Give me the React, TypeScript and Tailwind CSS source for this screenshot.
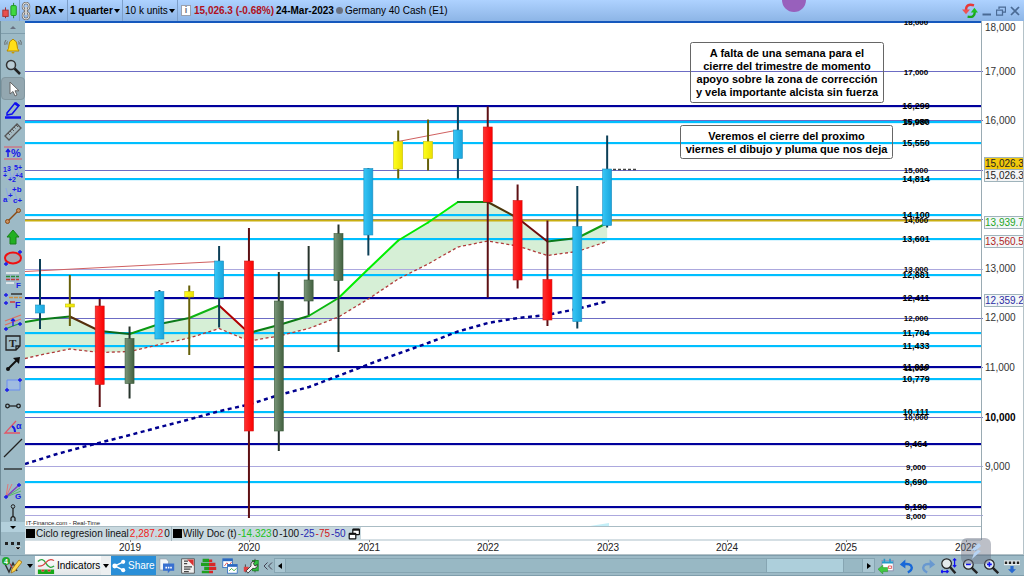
import type { ReactNode } from 'react'

const LEFT = 25
const TOP = 21
const AXIS_X = 981

const priceToY = (price: number) => 71.5 + (17000 - price) * 0.04938
const candleX = (index: number) => 40 + index * 29.85

const roundLevels = [17000, 16000, 15000, 14000, 13000, 12000, 11000, 10000, 9000, 8000]

const levels = [
  { price: 16299, color: '#00009c' },
  { price: 15980, color: '#00bfff' },
  { price: 15550, color: '#00bfff' },
  { price: 14814, color: '#00bfff' },
  { price: 14100, color: '#00bfff' },
  { price: 13601, color: '#00bfff' },
  { price: 12881, color: '#00bfff' },
  { price: 12411, color: '#00009c' },
  { price: 11704, color: '#00bfff' },
  { price: 11433, color: '#00bfff' },
  { price: 11010, color: '#00009c' },
  { price: 10779, color: '#00bfff' },
  { price: 10111, color: '#00bfff' },
  { price: 9464, color: '#00009c' },
  { price: 8690, color: '#00bfff' },
  { price: 8190, color: '#00009c' },
]

// kind, wick top, wick bottom, body top, body bottom
const candles: [string, number, number, number, number][] = [
  ['blue', 259, 329, 305, 313],
  ['yellow', 275, 326, 304, 307],
  ['red', 299, 407, 306, 384.5],
  ['green', 326.5, 398.5, 338.5, 383.5],
  ['blue', 290, 339, 291.5, 339],
  ['yellow', 285.5, 355, 291.5, 297],
  ['blue', 246, 327.5, 261, 297.5],
  ['red', 228, 518, 261, 431],
  ['green', 272, 451, 301, 431],
  ['green', 246, 315, 280, 301],
  ['green', 224.5, 352, 233.5, 280.5],
  ['blue', 168, 255.5, 168.5, 235],
  ['yellow', 130.5, 178.5, 141.5, 169],
  ['yellow', 119.5, 170.5, 141.5, 158.5],
  ['blue', 106.5, 178.5, 130, 158.5],
  ['red', 106.5, 297.5, 127, 202],
  ['red', 184.5, 288.5, 200.5, 280],
  ['red', 220.5, 326, 279.5, 320],
  ['blue', 186, 328.5, 226.5, 321.5],
  ['blue', 135.5, 227.5, 169, 225.5],
]

const bodyFill: Record<string, string> = {
  blue: 'url(#candle-blue)',
  yellow: 'url(#candle-yellow)',
  red: 'url(#candle-red)',
  green: 'url(#candle-green)',
}
const bodyStroke: Record<string, string> = {
  blue: '#1f8fc0',
  yellow: '#c8c010',
  red: '#d01818',
  green: '#3c5a3c',
}
const wickColor: Record<string, string> = {
  blue: '#0c3f57',
  yellow: '#66600a',
  red: '#5e1014',
  green: '#26332b',
}

const upper = [319.5, 316.5, 331, 334, 324, 318, 305.5, 333, 325, 316, 298, 269, 240.5, 222.5, 202, 202, 218, 241.5, 238, 223]
const lower = [355, 349, 352.5, 351.5, 344.5, 338, 328.5, 341, 336, 328.5, 317, 299, 279, 264, 247, 241, 246, 255.5, 251.5, 241.5]
const upperColors = [
  '#0b7a1b', '#562f0c', '#0b6a1b', '#0b9a12', '#0b7a1b', '#0fb414', '#b00000', '#0b8014', '#0b7a14', '#0bb80f',
  '#00ee00', '#00f000', '#00e800', '#00f000', '#0b8c14', '#4a360a', '#6e0c0c', '#0b7a1b', '#0f9c14',
]

const upperPoints = [`${LEFT},322`, ...upper.map((y, i) => `${candleX(i)},${y}`)]
const lowerPoints = [`${LEFT},358.5`, ...lower.map((y, i) => `${candleX(i)},${y}`)]

const slowAverage =
  '25,464 57,454 75,449 130,435 160,427 187,420 220,411 249,404.5 279,395 309,387 338,376 380,360 400,353 428,343 458,331.5 488,323 518,318 547,315 577,309 608,301'

const years = [2019, 2020, 2021, 2022, 2023, 2024, 2025, 2026]

const Note = ({ x, y, width, height, lines }: { x: number; y: number; width: number; height: number; lines: string[] }) => (
  <g>
    <rect x={x} y={y} width={width} height={height} rx="2" fill="none" stroke="#666" />
    {lines.map((line, i) => (
      <text
        key={line}
        x={x + width / 2}
        y={y + 14 + i * 13}
        textAnchor="middle"
        className="fill-black text-[11px] font-bold"
      >
        {line}
      </text>
    ))}
  </g>
)

const PriceTag = ({ y, text, fill, color }: { y: number; text: string; fill: string; color: string }) => (
  <g>
    <rect x="984.5" y={y - 6.5} width="42" height="12" fill={fill} stroke="#9fb3bb" />
    <text x="985" y={y + 3} fill={color} className="text-[10px]">
      {text}
    </text>
  </g>
)

const Chart = () => (
  <svg viewBox="25 21 999 534" className="block h-full w-full" role="img" aria-label="DAX">
    <defs>
      <linearGradient id="candle-blue">
        <stop offset="0" stopColor="#35c6f6" />
        <stop offset="1" stopColor="#1aa5dc" />
      </linearGradient>
      <linearGradient id="candle-yellow">
        <stop offset="0" stopColor="#ffff1c" />
        <stop offset="1" stopColor="#ebe000" />
      </linearGradient>
      <linearGradient id="candle-red">
        <stop offset="0" stopColor="#ff3232" />
        <stop offset="1" stopColor="#fb0000" />
      </linearGradient>
      <linearGradient id="candle-green">
        <stop offset="0" stopColor="#7a967a" />
        <stop offset="1" stopColor="#42603f" />
      </linearGradient>
    </defs>

    <polygon points={[...upperPoints, ...[...lowerPoints].reverse()].join(' ')} fill="#d6efd6" />

    {/* price levels */}
    <path d={`M${LEFT} 22H${AXIS_X}`} stroke="#1558bd" strokeWidth="2" />
    {roundLevels.map((price) => (
      <path
        key={price}
        d={`M${LEFT} ${Math.floor(priceToY(price)) + 0.5}H${AXIS_X + 2}`}
        stroke={price === 8000 || price === 9000 || price === 13000 ? '#aca8de' : '#6c6cc4'}
      />
    ))}
    {levels.map(({ price, color }) => (
      <g key={price}>
        <path d={`M${LEFT} ${Math.round(priceToY(price))}H${AXIS_X}`} stroke={color} strokeWidth="2" />
        <path d={`M${LEFT} ${Math.round(priceToY(price)) + 1}H${AXIS_X}`} stroke={color} opacity="0.3" />
      </g>
    ))}
    <path d={`M${LEFT} 220.5H${AXIS_X}`} stroke="#c9ae10" strokeWidth="2" />

    <path d="M25 271.5L219 261.5M398 141.5L458 130" stroke="#d06060" fill="none" />

    {/* fast averages */}
    <polyline points={lowerPoints.join(' ')} fill="none" stroke="#b03a3a" strokeWidth="1.3" strokeDasharray="3 2.5" />
    <path d={`M${LEFT} 322L40 319.5`} stroke="#0b8c14" strokeWidth="2" />
    {upperColors.map((color, i) => (
      <path
        key={i}
        d={`M${candleX(i)} ${upper[i]}L${candleX(i + 1)} ${upper[i + 1]}`}
        stroke={color}
        strokeWidth="2"
        strokeLinecap="round"
      />
    ))}
    <polyline points={slowAverage} fill="none" stroke="#00008f" strokeWidth="2.5" strokeDasharray="4 3.5" />

    {candles.map(([kind, high, low, top, bottom], i) => (
      <g key={i}>
        <path d={`M${candleX(i)} ${high}V${low}`} stroke={wickColor[kind]} strokeWidth="2" />
        <rect
          x={candleX(i) - 4.5}
          y={top}
          width="9"
          height={bottom - top}
          fill={bodyFill[kind]}
          stroke={bodyStroke[kind]}
          strokeWidth="0.6"
        />
      </g>
    ))}
    <path d="M613 169.5H638" stroke="#444" strokeWidth="1.5" strokeDasharray="3 2" />
    <path d="M590 526L609 523V526Z" fill="#c4eff8" />

    {/* level captions */}
    <g textAnchor="middle" className="fill-black text-[8px] font-bold">
      <text x="916" y="25">18,000</text>
      {roundLevels.map((price) => (
        <text key={price} x="916" y={priceToY(price) + 3}>
          {price.toLocaleString('en-US')}
        </text>
      ))}
    </g>
    <g textAnchor="middle" className="fill-black text-[9px] font-bold">
      {levels.map(({ price }) => (
        <text key={price} x="916" y={priceToY(price) + 3}>
          {price.toLocaleString('en-US')}
        </text>
      ))}
    </g>

    <Note
      x={690.5}
      y={42.5}
      width={193}
      height={60}
      lines={[
        'A falta de una semana para el',
        'cierre del trimestre de momento',
        'apoyo sobre la zona de corrección',
        'y vela importante alcista sin fuerza',
      ]}
    />
    <Note
      x={680.5}
      y={125.5}
      width={212}
      height={33}
      lines={['Veremos el cierre del proximo', 'viernes el dibujo y pluma que nos deja']}
    />

    {/* price axis */}
    <path d={`M${AXIS_X + 0.5} ${TOP}V540`} stroke="#9aabb3" />
    <g className="fill-[#333] text-[10px]">
      <text x="985" y="31">18,000</text>
      {[17000, 16000, 13000, 12000, 11000, 9000].map((price) => (
        <text key={price} x="985" y={Math.round(priceToY(price)) + 3}>
          {price.toLocaleString('en-US')}
        </text>
      ))}
      <text x="985" y="421" className="fill-black font-bold">10,000</text>
    </g>
    <PriceTag y={176} text="15,026.3" fill="#f4f5f6" color="#222" />
    <PriceTag y={164} text="15,026.3" fill="#f2c80c" color="#222" />
    <PriceTag y={223} text="13,939.7" fill="#f3f7f8" color="#1fa51f" />
    <PriceTag y={242} text="13,560.5" fill="#f3f7f8" color="#b02424" />
    <PriceTag y={301} text="12,359.2" fill="#f3f7f8" color="#2c2ca4" />

    {/* time axis */}
    <path d={`M${LEFT} 526.5H${AXIS_X}`} stroke="#aabcc4" />
    <path d={`M${LEFT} 540H${AXIS_X}`} stroke="#d5dfe4" strokeWidth="2" />
    <path d="M25 554.5H1024M1023.5 21V555" stroke="#b4c2c8" />
    <g textAnchor="middle" className="fill-[#222] text-[10px]">
      {years.map((year, i) => (
        <g key={year}>
          <path d={`M${Math.round(130 + i * 119.4)}.5 540v2`} stroke="#888" />
          <text x={Math.round(130 + i * 119.4)} y="551">{year}</text>
        </g>
      ))}
    </g>
    <text x="26" y="525" className="fill-[#222] text-[6px]">IT-Finance.com - Real-Time</text>
  </svg>
)

const Icon = ({ children, className = 'h-5 w-5' }: { children: ReactNode; className?: string }) => (
  <svg viewBox="0 0 20 20" fill="none" className={`shrink-0 ${className}`} aria-hidden="true">
    {children}
  </svg>
)

const Caret = () => <span className="border-x-3 border-t-4 border-x-transparent border-t-black" />

const plus = (x: number, y: number) => `M${x - 2} ${y}h4M${x} ${y - 2}v4`

const tools: { name: string; icon: ReactNode }[] = [
  {
    name: 'Alerts',
    icon: (
      <>
        <path d="M4 15q2-2 2-6 0-4 3-5 1-2 2 0 3 1 3 5 0 4 2 6z" fill="#ffdf18" stroke="#b78a00" />
        <path d="M8.500 16a1.500 1.500 0 0 0 3 0" fill="#c79a00" />
        <path d="M3 4Q1 6 2 9M17 4q2 2 1 5M4.500 5.500q-1 1-.5 3M15.500 5.500q1 1 .5 3" stroke="#555" strokeWidth="0.8" />
      </>
    ),
  },
  {
    name: 'Zoom',
    icon: (
      <>
        <circle cx="8" cy="8" r="4.500" stroke="#333" strokeWidth="1.500" fill="#b9ccd4" />
        <path d="M11.500 11.500L17 17" stroke="#222" strokeWidth="2.500" />
      </>
    ),
  },
  { name: 'Pointer', icon: <path d="M7 3v12l3-2.500 2 4.500 2-1-2-4.200h4z" fill="#fff" stroke="#666" /> },
  {
    name: 'Pencil',
    icon: (
      <>
        <path d="M4 12L12 2l4 2.500L9 13l-5 1z" stroke="#1010ee" strokeWidth="1.500" />
        <path d="M11 3l4 3 1.500-2-3.500-3z" fill="#1010ee" />
        <path d="M2 16.500h16" stroke="#1010ee" strokeWidth="2.500" />
      </>
    ),
  },
  {
    name: 'Ruler',
    icon: (
      <>
        <path d="M2 14L14 2l4 4L6 18z" stroke="#555" strokeWidth="1.300" fill="#a4b9c1" />
        <path d="M5 11l2 2M7 9l1.500 1.500M9 7l2 2M11 5l1.500 1.500M13 3l2 2" stroke="#555" />
      </>
    ),
  },
  {
    name: 'Percent',
    icon: (
      <>
        <path d="M1 4h18M1 16h18" stroke="#e05868" />
        <path d="M5 14V7M3 9l2-2.500L7 9" stroke="#1818e8" strokeWidth="1.500" />
        <text x="8" y="14" fill="#1818e8" fontSize="11" fontWeight="bold">%</text>
      </>
    ),
  },
  {
    name: 'Elliott impulse',
    icon: (
      <>
        <path d="M2 12l4-7 3 10 5-12 3 9" stroke="#8ca4e8" />
        <g fill="#1818e8" fontSize="7" fontWeight="bold">
          <text x="0" y="8">1</text>
          <text x="4" y="7">3</text>
          <text x="11" y="6">5+</text>
          <text x="12" y="14">+4</text>
          <text x="5" y="18">+2</text>
          <text x="0" y="14">+</text>
        </g>
      </>
    ),
  },
  {
    name: 'Elliott correction',
    icon: (
      <>
        <path d="M3 3l3 12 5-10 4 12" stroke="#8ca4e8" />
        <g fill="#1818e8" fontSize="8" fontWeight="bold">
          <text x="9" y="7">+b</text>
          <text x="0" y="17">a</text>
          <text x="5" y="13">+</text>
          <text x="10" y="18">c+</text>
        </g>
      </>
    ),
  },
  {
    name: 'Segment',
    icon: (
      <>
        <path d="M5 15L15 5" stroke="#8b4a12" strokeWidth="1.500" />
        <circle cx="4.500" cy="15.500" r="2" stroke="#8b4a12" fill="#c89060" />
        <circle cx="15.500" cy="4.500" r="2" stroke="#8b4a12" fill="#c89060" />
      </>
    ),
  },
  { name: 'Up arrow', icon: <path d="M10 3l6 7h-3v7H7v-7H4z" fill="#22b022" stroke="#188018" /> },
  {
    name: 'Ellipse',
    icon: (
      <>
        <ellipse cx="10" cy="10" rx="8" ry="5.500" fill="#a8a8b0" stroke="#f01010" strokeWidth="2" />
        <path d={`${plus(17, 4)}${plus(3, 16)}`} stroke="#1818e8" strokeWidth="1.300" />
      </>
    ),
  },
  {
    name: 'Fibonacci',
    icon: (
      <>
        <path d="M3 3h13" stroke="#f4f4f4" strokeWidth="1.500" />
        <path d="M3 6.500h13" stroke="#2a8a3a" strokeWidth="1.500" strokeDasharray="4 1" />
        <path d="M3 9.500h13" stroke="#c03838" strokeWidth="1.500" strokeDasharray="4 1" />
        <path d="M3 13h8" stroke="#f4f4f4" strokeWidth="1.500" />
        <text x="13" y="18" fill="#1818e8" fontSize="8" fontWeight="bold">F</text>
      </>
    ),
  },
  {
    name: 'Fibonacci extension',
    icon: (
      <>
        <path d="M8 3h11" stroke="#333" strokeWidth="1.500" />
        <path d="M6 6.500h13" stroke="#d09040" strokeWidth="1.500" strokeDasharray="4 1" />
        <path d="M7 11h5" stroke="#d03838" strokeWidth="1.500" />
        <path d={`${plus(3, 4)}${plus(3, 12)}`} stroke="#1818e8" strokeWidth="1.300" />
        <text x="12" y="17" fill="#1818e8" fontSize="9" fontWeight="bold">F</text>
      </>
    ),
  },
  {
    name: 'Channel',
    icon: (
      <>
        <path d="M2 9l16-6M2 13l16-6" stroke="#e07060" strokeWidth="1.300" />
        <path d="M2 17l16-6" stroke="#30a040" strokeWidth="1.300" />
        <path d={`${plus(3, 17)}${plus(17, 12)}M10 14V7M8 9l2-2 2 2`} stroke="#1818e8" strokeWidth="1.300" />
      </>
    ),
  },
  {
    name: 'Text',
    icon: (
      <>
        <path d="M3 3h14v10l-4 4H3z M13 17v-4h4" stroke="#222" strokeWidth="1.300" />
        <text x="6" y="14" fill="#222" fontSize="11" fontWeight="bold" fontFamily="Liberation Serif, serif">T</text>
      </>
    ),
  },
  {
    name: 'Arrow',
    icon: (
      <>
        <path d="M5 15L14 6" stroke="#111" strokeWidth="2" />
        <path d="M10 4l7-1-1 7z" fill="#111" />
        <circle cx="5" cy="15" r="2" fill="#111" />
      </>
    ),
  },
  {
    name: 'Rectangle',
    icon: (
      <>
        <path d="M4 5h13v10H4z" stroke="#6a8cf0" fill="#a0bce0" />
        <path d={`${plus(17, 5)}${plus(4, 15)}`} stroke="#1818e8" strokeWidth="1.300" />
      </>
    ),
  },
  {
    name: 'Horizontal segment',
    icon: (
      <>
        <path d="M6 10h8" stroke="#222" strokeWidth="1.300" />
        <circle cx="4.500" cy="10" r="1.800" stroke="#222" strokeWidth="1.300" />
        <circle cx="15.500" cy="10" r="1.800" stroke="#222" strokeWidth="1.300" />
      </>
    ),
  },
  {
    name: 'Angle',
    icon: (
      <>
        <path d="M17 16H2L13 4" stroke="#e05868" strokeWidth="1.300" />
        <path d="M9 9q3 2 3 6" stroke="#1818e8" strokeWidth="2" />
        <text x="13" y="12" fill="#1818e8" fontSize="9" fontWeight="bold">α</text>
      </>
    ),
  },
  { name: 'Line', icon: <path d="M1 19L19 1" stroke="#222" strokeWidth="1.300" /> },
  { name: 'Horizontal line', icon: <path d="M1 10h18" stroke="#222" strokeWidth="1.300" /> },
  {
    name: 'Gann fan',
    icon: (
      <>
        <path d="M3 16L5 3M3 16L9 3" stroke="#e07878" />
        <path d="M3 16L18 10M3 16l14-9" stroke="#58b868" />
        <path d="M3 16L16 4" stroke="#8040c0" strokeWidth="1.500" />
        <path d={`${plus(3, 16)}${plus(16, 4)}`} stroke="#1818e8" strokeWidth="1.300" />
        <text x="12" y="18" fill="#1818e8" fontSize="8" fontWeight="bold">G</text>
      </>
    ),
  },
  {
    name: 'Vertical segment',
    icon: (
      <>
        <path d="M10 6v8" stroke="#222" strokeWidth="1.300" />
        <circle cx="10" cy="4.500" r="1.800" stroke="#222" />
        <path d="M8 19v-3q2-3 4 0v3" stroke="#222" strokeWidth="1.300" />
      </>
    ),
  },
]

const Header = () => (
  <header className="flex h-[21px] shrink-0 items-center overflow-hidden bg-linear-to-b from-[#aed2ff] to-[#8db5e6] text-[10px] whitespace-nowrap text-black">
    <button aria-label="Chart style" className="flex h-full w-5 items-center justify-center border-r border-[#7d9fc9]">
      <Icon className="h-[18px] w-[18px]">
        <path d="M5 6v12" stroke="#a02020" />
        <rect x="2" y="9" width="6" height="7" fill="#e85050" stroke="#a83030" />
        <path d="M14 1v17" stroke="#188018" />
        <rect x="11" y="4" width="6" height="11" rx="1" fill="#40d840" stroke="#209020" />
      </Icon>
    </button>
    <button aria-label="Link charts" className="flex w-3 items-center justify-center">
      <svg viewBox="0 0 12 18" fill="none" className="h-[18px] w-3" aria-hidden="true">
        <rect x="3" y="1" width="6" height="7" rx="3" stroke="#777" strokeWidth="2.500" />
        <rect x="3" y="10" width="6" height="7" rx="3" stroke="#777" strokeWidth="2.500" />
        <rect x="3" y="1" width="6" height="7" rx="3" stroke="#ddd" />
        <rect x="3" y="10" width="6" height="7" rx="3" stroke="#ddd" />
        <path d="M6 5v8" stroke="#777" strokeWidth="3" />
        <path d="M6 5v8" stroke="#eee" strokeWidth="1.500" />
      </svg>
    </button>
    <button className="flex h-full w-9 items-center justify-between border-r border-[#7d9fc9] pr-[3px] pl-[3px] font-bold">
      DAX <Caret />
    </button>
    <button className="flex h-full w-[55px] items-center justify-between border-r border-[#7d9fc9] pr-[2px] pl-[2px] font-bold">
      1 quarter <Caret />
    </button>
    <button className="flex h-full w-[55px] items-center justify-between border-r border-[#7d9fc9] pr-[2px] pl-[2px]">
      10 k units <Caret />
    </button>
    <button aria-label="Information" className="mx-[3px] flex h-[11px] w-[10px] items-center justify-center border border-gray-400 bg-white text-[9px] font-bold text-gray-500">
      i
    </button>
    <p className="mr-[2px] font-bold text-[#b01020]">15,026.3 (-0.68%)</p>
    <p className="mr-[2px] font-bold">24-Mar-2023</p>
    <span className="mr-[2px] h-[7px] w-[7px] rounded-full bg-gray-500" />
    <h1>Germany 40 Cash (E1)</h1>
    <div className="mr-1 ml-auto flex items-center gap-1 text-[#4a6a94]">
      <button aria-label="Refresh">
        <Icon className="h-4 w-4">
          <path d="M15 3Q5 0 5 9" stroke="#e83838" strokeWidth="3" />
          <path d="M0 8h10l-5 6z" fill="#f05050" />
          <path d="M7 17q9 2 9-6" stroke="#18a818" strokeWidth="3" />
          <path d="M11 12h9l-4.500-6z" fill="#20c020" />
        </Icon>
      </button>
      <button aria-label="Minimize">
        <Icon className="h-[10px] w-[10px]">
          <path d="M1 17h17" stroke="currentColor" strokeWidth="4" />
        </Icon>
      </button>
      <button aria-label="Restore">
        <Icon className="h-[10px] w-[10px]">
          <path d="M6 6V2h13v10h-5" stroke="currentColor" strokeWidth="2.500" />
          <path d="M1 8h12v10H1z" stroke="currentColor" strokeWidth="2.500" />
        </Icon>
      </button>
      <button aria-label="Close">
        <Icon className="h-[10px] w-[10px]">
          <path d="M2 2l16 16M18 2L2 18" stroke="currentColor" strokeWidth="3.500" />
        </Icon>
      </button>
    </div>
  </header>
)

const Toolbar = () => (
  <nav className="flex w-[25px] shrink-0 flex-col border-l border-[#6f8c98] bg-[#9dbac6]">
    <button aria-label="Scroll up" className="flex h-[13px] items-center justify-center border-b border-[#7f9dab]">
      <span className="border-x-3 border-b-3 border-x-transparent border-b-gray-500" />
    </button>
    <div className="flex min-h-0 flex-1 flex-col pt-px">
      {tools.map(({ name, icon }) => (
        <button
          key={name}
          aria-label={name}
          className={`flex min-h-0 flex-1 items-center justify-center ${
            name === 'Pointer' ? 'rounded-sm border border-[#8297a0] bg-[#93a7b0]' : ''
          }`}
        >
          <Icon>{icon}</Icon>
        </button>
      ))}
    </div>
    <button aria-label="Scroll down" className="flex h-[10px] items-center justify-center bg-[#b3d0dc]">
      <span className="border-x-3 border-t-3 border-x-transparent border-t-black" />
    </button>
    <button aria-label="More tools" className="flex h-[23px] items-center justify-center">
      <Icon>
        <path d="M2 8h3v3H2zM8 8h3v3H8zM14 8h3v3h-3z" fill="#222" />
        <path d="M12 13h6l-3 3z" fill="#000" stroke="#fff" strokeWidth="0.500" />
      </Icon>
    </button>
  </nav>
)

const Legend = () => (
  <div className="absolute bottom-[15px] left-0 flex h-[13px] items-center bg-[#c9d9df] text-[10px] whitespace-nowrap text-[#111]">
    <div className="flex items-center gap-px border-r border-[#9fb3bb] px-px">
      <span className="h-[9px] w-[9px] bg-black" />
      <span>Ciclo regresion lineal</span>
      <span className="text-[#f02020]">2,287.2</span>
      <span>0</span>
    </div>
    <div className="flex items-center gap-px px-px">
      <span className="h-[9px] w-[9px] bg-black" />
      <span>Willy Doc (t)</span>
      <span className="text-[#20c020]">-14.323</span>
      <span>0</span>
      <span>-100</span>
      <span className="text-[#2828b0]">-25</span>
      <span className="text-[#d02020]">-75</span>
      <span className="text-[#2828b0]">-50</span>
    </div>
    <button aria-label="Detach indicator" className="flex w-[14px] items-center justify-center">
      <Icon className="h-3 w-3">
        <rect x="8" y="2" width="11" height="9" rx="1" fill="#fff" stroke="#111" strokeWidth="2" />
        <path d="M8 3h11" stroke="#111" strokeWidth="3" />
        <rect x="2" y="9" width="11" height="9" rx="1" fill="#fff" stroke="#111" strokeWidth="2" />
        <path d="M2 10h11" stroke="#111" strokeWidth="3" />
      </Icon>
    </button>
  </div>
)

const BottomIcon = ({ name, children }: { name: string; children: ReactNode }) => (
  <button aria-label={name} className="flex w-[21px] items-center justify-center">
    <Icon className="h-4 w-4">{children}</Icon>
  </button>
)

const BottomBar = () => (
  <footer className="flex h-[21px] shrink-0 items-stretch border-t border-b border-[#7f9dab] bg-[#9dbac6] text-[10px] text-black">
    <button aria-label="Drawing tools" className="flex w-6 items-center justify-center">
      <Icon>
        <path d="M3 8l4 8 4-9 4 8" stroke="#333" strokeWidth="1.500" />
        <path d="M7 6l5 9" stroke="#c03030" />
        <path d="M9 17l1-4 7-9 3 2-7 9z" fill="#ffd850" stroke="#a07010" strokeWidth="0.800" />
        <circle cx="4" cy="5" r="4" fill="#20a830" />
        <text x="2" y="8" fill="#fff" fontSize="7" fontWeight="bold">4</text>
      </Icon>
    </button>
    <button aria-label="Drawing options" className="flex w-[11px] items-center justify-center">
      <Caret />
    </button>
    <button className="flex w-[66px] items-center gap-[2px] bg-linear-to-b from-white to-[#e2e6e8] pl-[2px]">
      <Icon className="h-[18px] w-[18px]">
        <path d="M1 5q5-5 9 2t9 3" stroke="#30a840" strokeWidth="1.500" />
        <path d="M1 10q5 1 9-4t9-2" stroke="#d84040" strokeWidth="1.200" />
        <path d="M1 19v-5h4v2h3v-2h4v2h3v-2h4v5z" fill="#18a818" />
        <path d="M5 14h3v2H5zM12 14h3v2h-3z" fill="#d83030" />
      </Icon>
      Indicators
    </button>
    <button aria-label="Indicator options" className="flex w-[10px] items-center justify-center bg-[#eceff0]">
      <Caret />
    </button>
    <button className="flex w-[45px] items-center gap-[2px] bg-[#2a8fd8] pl-px text-white">
      <Icon className="h-[14px] w-[14px]">
        <path d="M16 4L4 10l12 6" stroke="#fff" strokeWidth="2" />
        <circle cx="16" cy="4" r="3" fill="#fff" />
        <circle cx="4" cy="10" r="3.500" fill="#fff" />
        <circle cx="16" cy="16" r="3" fill="#fff" />
      </Icon>
      Share
    </button>
    <BottomIcon name="Comments">
      <path d="M1 1h8l3 3v11H1z" fill="#f2f5f8" stroke="#8c9ca8" />
      <path d="M5 7h14v9h-5l-3 3v-3H5z" fill="#3870d0" />
      <path d="M8 11h2v2H8zM11 11h2v2h-2zM14 11h2v2h-2z" fill="#fff" />
    </BottomIcon>
    <BottomIcon name="News">
      <path d="M2 1h16v18H2z" fill="#f0f0f0" stroke="#444" />
      <path d="M5 4h5M5 7h4M5 11h10M5 14h8M5 17h6" stroke="#444" strokeWidth="1.500" />
      <path d="M9 2h8v8z" fill="#d83030" />
    </BottomIcon>
    <BottomIcon name="Order book">
      <path d="M2 1h8v4H2zM0 6h10v4H0zM4 11h6v4H4zM1 16h9v3H1z" fill="#20a020" />
      <path d="M10 2h4v3h-4zM10 6h8v4h-8zM10 11h9v4h-9zM10 16h5v3h-5z" fill="#d82828" />
    </BottomIcon>
    <BottomIcon name="Windows">
      <rect x="1" y="1" width="12" height="11" fill="#fff" stroke="#2a68c0" />
      <path d="M1 2.500h12" stroke="#2a68c0" strokeWidth="3" />
      <path d="M3 10l3-4 3 3 3-4" stroke="#d83838" />
      <rect x="7" y="8" width="12" height="11" fill="#fff" stroke="#2a68c0" />
      <path d="M7 9.500h12" stroke="#2a68c0" strokeWidth="3" />
      <path d="M9 16l3-3 3 3 3-3" stroke="#20a020" />
    </BottomIcon>
    <BottomIcon name="Settings">
      <path d="M3 8v10M15 1v17" stroke="#333" />
      <rect x="1" y="11" width="6" height="6" fill="#e04040" />
      <rect x="12" y="3" width="7" height="13" fill="#30c040" stroke="#188020" />
      <path d="M4 16l6-6q-1-6 5-6l-2 3 2 3 3-2q0 6-6 5l-6 6z" fill="#f4f4f4" stroke="#222" />
    </BottomIcon>
    <button aria-label="Collapse" className="flex w-[13px] items-center justify-center">
      <Icon className="h-[10px] w-[10px]">
        <path d="M9 3l-7 7 7 7M18 3l-7 7 7 7" stroke="#445" strokeWidth="2" />
      </Icon>
    </button>
    <button aria-label="Scroll left" className="my-[2px] flex w-[12px] items-center justify-center border border-[#86a5b2] bg-[#a9c6d2]">
      <span className="border-y-3 border-r-4 border-y-transparent border-r-black" />
    </button>
    <div className="my-[2px] flex flex-1 border-y border-[#86a5b2] bg-[#98b8c4]">
      <div className="ml-auto w-[78px] border-x border-[#86a5b2] bg-[#adcfdb]" />
      <div className="w-[18px]" />
    </div>
    <button aria-label="Scroll right" className="my-[2px] flex w-[13px] items-center justify-center border border-[#86a5b2] bg-[#a9c6d2]">
      <span className="border-y-3 border-l-4 border-y-transparent border-l-black" />
    </button>
    <div className="mr-[2px] flex">
      <BottomIcon name="Go to date">
        <rect x="5" y="3" width="14" height="13" fill="#fff" stroke="#88a" />
        <path d="M5 4h14v3H5zM7 1h2v3H7zM14 1h2v3h-2z" fill="#2898c8" />
        <path d="M13 10h4v3h-4z" stroke="#e04040" />
        <path d="M0 14l6-5v3h6v5H6v3z" fill="#40c840" stroke="#209020" strokeWidth="0.600" />
      </BottomIcon>
      <BottomIcon name="Undo">
        <path d="M5 8q10-2 11 4 0 4-5 6" stroke="#1868d8" strokeWidth="3" />
        <path d="M8 2v11L1 8z" fill="#1868d8" />
      </BottomIcon>
      <BottomIcon name="Redo">
        <path d="M15 8Q5 6 4 12q0 4 5 6" stroke="#6898d0" strokeWidth="3" />
        <path d="M12 2v11l7-5z" fill="#6898d0" />
      </BottomIcon>
      <BottomIcon name="Fit zoom">
        <circle cx="7" cy="7" r="6" fill="#e4eaec" stroke="#222" strokeWidth="1.500" />
        <path d="M11 11l7 8" stroke="#222" strokeWidth="3" />
        <path d="M17 1v10M15 3l2-2 2 2M15 9l2 2 2-2M0 17h9M2 15l-2 2 2 2M7 15l2 2-2 2" stroke="#1010f0" strokeWidth="1.500" />
      </BottomIcon>
      <BottomIcon name="Zoom out">
        <circle cx="8" cy="8" r="6" fill="#dfe8f4" stroke="#222" strokeWidth="1.500" />
        <path d="M12 12l7 7" stroke="#222" strokeWidth="3" />
        <path d="M5 8h6" stroke="#1010f0" strokeWidth="2" />
      </BottomIcon>
      <BottomIcon name="Zoom in">
        <circle cx="8" cy="8" r="6" fill="#dfe8f4" stroke="#222" strokeWidth="1.500" />
        <path d="M12 12l7 7" stroke="#222" strokeWidth="3" />
        <path d="M5 8h6M8 5v6" stroke="#1010f0" strokeWidth="2" />
      </BottomIcon>
      <BottomIcon name="More">
        <path d="M0 3h20v6H0z" fill="#e8eef0" />
        <path d="M1 6h3M6 6h3M11 6h3M16 6h3" stroke="#222" strokeWidth="3" />
        <path d="M8 10h4v4h3l-5 5-5-5h3z" fill="#2868d0" />
      </BottomIcon>
    </div>
  </footer>
)

export default function App() {
  return (
    <div className="relative flex h-screen flex-col overflow-hidden bg-white font-['Liberation_Sans',Arial,sans-serif]">
      <Header />
      <div className="flex min-h-0 flex-1">
        <Toolbar />
        <main className="relative min-w-0 flex-1">
          <Chart />
          <Legend />
        </main>
      </div>
      <BottomBar />
      <span className="absolute -top-3 right-[218px] h-6 w-6 rounded-full bg-[#9860bc]" />
      <div className="absolute right-[33px] bottom-3 flex h-[26px] w-[30px] items-center justify-center rounded-md bg-gray-500/45">
        <Icon>
          <path d="M13 2L5 9l4 1 6-5zM15 10l-9 8 2-6 4-3z" fill="#b8d4f4" />
        </Icon>
      </div>
    </div>
  )
}
